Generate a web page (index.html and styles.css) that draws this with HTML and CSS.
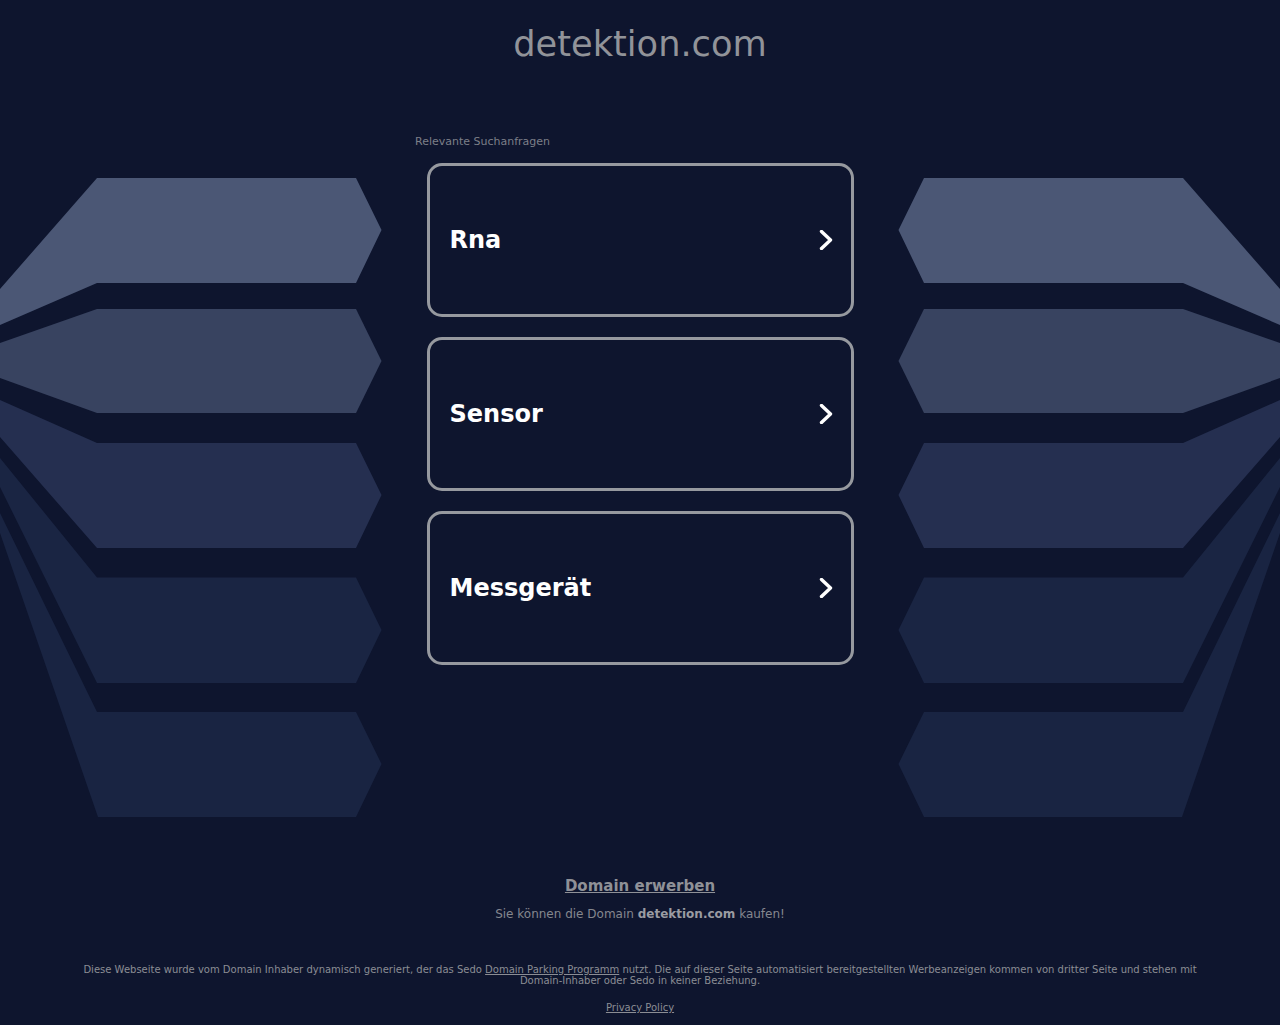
FILE: index.html
```html
<!DOCTYPE html>
<html lang="de">
<head>
<meta charset="utf-8">
<title>detektion.com</title>
<link rel="stylesheet" href="styles.css">
</head>
<body>
<svg class="backdrop" width="1280" height="1025" viewBox="0 0 1280 1025" aria-hidden="true">
  <g>
    <polygon class="s5" points="97,712 356,712 381.5,764 356,817 98,817 0,533 0,513"/>
    <polygon class="s4" points="97,577.5 356,577.5 381.5,630 356,683 97,683 0,487 0,458"/>
    <polygon class="s3" points="97,443 356,443 381.5,495 356,548 97,548 0,437 0,400"/>
    <polygon class="s2" points="97,309 356,309 381.5,361 356,413 97,413 0,378 0,343"/>
    <polygon class="s1" points="97,178 356,178 381.5,230 356,283 97,283 0,325 0,289"/>
  </g>
  <g transform="translate(1280 0) scale(-1 1)">
    <polygon class="s5" points="97,712 356,712 381.5,764 356,817 98,817 0,533 0,513"/>
    <polygon class="s4" points="97,577.5 356,577.5 381.5,630 356,683 97,683 0,487 0,458"/>
    <polygon class="s3" points="97,443 356,443 381.5,495 356,548 97,548 0,437 0,400"/>
    <polygon class="s2" points="97,309 356,309 381.5,361 356,413 97,413 0,378 0,343"/>
    <polygon class="s1" points="97,178 356,178 381.5,230 356,283 97,283 0,325 0,289"/>
  </g>
</svg>
<div class="page">
  <h1 class="domain">detektion.com</h1>
  <main class="ads">
    <p class="ads-label">Relevante Suchanfragen</p>
    <div class="ad-list">
      <a class="ad" href="#"><span class="ad-text">Rna</span><svg class="chev" width="16" height="20" viewBox="0 0 16 20"><path d="M3.5 1.5 L12.5 10 L3.5 18.5"/></svg></a>
      <a class="ad" href="#"><span class="ad-text">Sensor</span><svg class="chev" width="16" height="20" viewBox="0 0 16 20"><path d="M3.5 1.5 L12.5 10 L3.5 18.5"/></svg></a>
      <a class="ad" href="#"><span class="ad-text">Messgerät</span><svg class="chev" width="16" height="20" viewBox="0 0 16 20"><path d="M3.5 1.5 L12.5 10 L3.5 18.5"/></svg></a>
    </div>
  </main>
  <section class="buy">
    <a class="buy-link" href="#">Domain erwerben</a>
    <p class="buy-text">Sie können die Domain <strong>detektion.com</strong> kaufen!</p>
  </section>
  <footer class="foot">
    <p class="disclaimer">Diese Webseite wurde vom Domain Inhaber dynamisch generiert, der das Sedo <a href="#">Domain Parking Programm</a> nutzt. Die auf dieser Seite automatisiert bereitgestellten Werbeanzeigen kommen von dritter Seite und stehen mit Domain-Inhaber oder Sedo in keiner Beziehung.</p>
    <a class="privacy" href="#">Privacy Policy</a>
  </footer>
</div>
</body>
</html>
```
FILE: styles.css
```css
html, body { margin: 0; padding: 0; height: 1025px; overflow: hidden; }
body { background: #0e152e; font-family: "DejaVu Sans", sans-serif; color: #96999f; position: relative; }
.backdrop { position: absolute; left: 0; top: 0; }
.s1 { fill: #4b5775; }
.s2 { fill: #384360; }
.s3 { fill: #252f50; }
.s4 { fill: #1a2543; }
.s5 { fill: #192442; }
.page { position: relative; display: flex; flex-direction: column; align-items: center; height: 1025px; }
.domain { margin: 22px 0 0; font-size: 35.2px; line-height: 43px; font-weight: 400; color: #919399; }
.ads { width: 450px; margin-top: 70px; }
.ads-label { margin: 0; font-size: 11px; line-height: 13px; color: #7c7f88; }
.ad-list { display: flex; flex-direction: column; gap: 20px; margin-top: 15px; align-items: center; }
.ad { box-sizing: border-box; width: 427px; height: 154px; border: 3px solid #96999f; border-radius: 15px; background: #0e152e; display: flex; align-items: center; justify-content: space-between; padding: 0 17px 0 20px; text-decoration: none; color: #fff; font-size: 24px; font-weight: 700; }
.ad-text { line-height: 28px; }
.chev { fill: none; stroke: #fff; stroke-width: 3.4; stroke-linecap: round; stroke-linejoin: round; }
.buy { margin-top: 212px; text-align: center; }
.buy-link { font-size: 15px; line-height: 19px; font-weight: 700; color: #8f9197; display: block; }
.buy-text { margin: 11px 0 0; font-size: 12px; line-height: 15px; color: #85878f; }
.buy-text strong { color: #9a9ca2; }
.foot { width: 1120px; margin-top: 42px; text-align: center; font-size: 10px; line-height: 11px; color: #8b8d94; }
.disclaimer { margin: 0; }
.foot a { color: #8b8d94; }
.privacy { display: inline-block; margin-top: 16px; line-height: 12px; }
```
